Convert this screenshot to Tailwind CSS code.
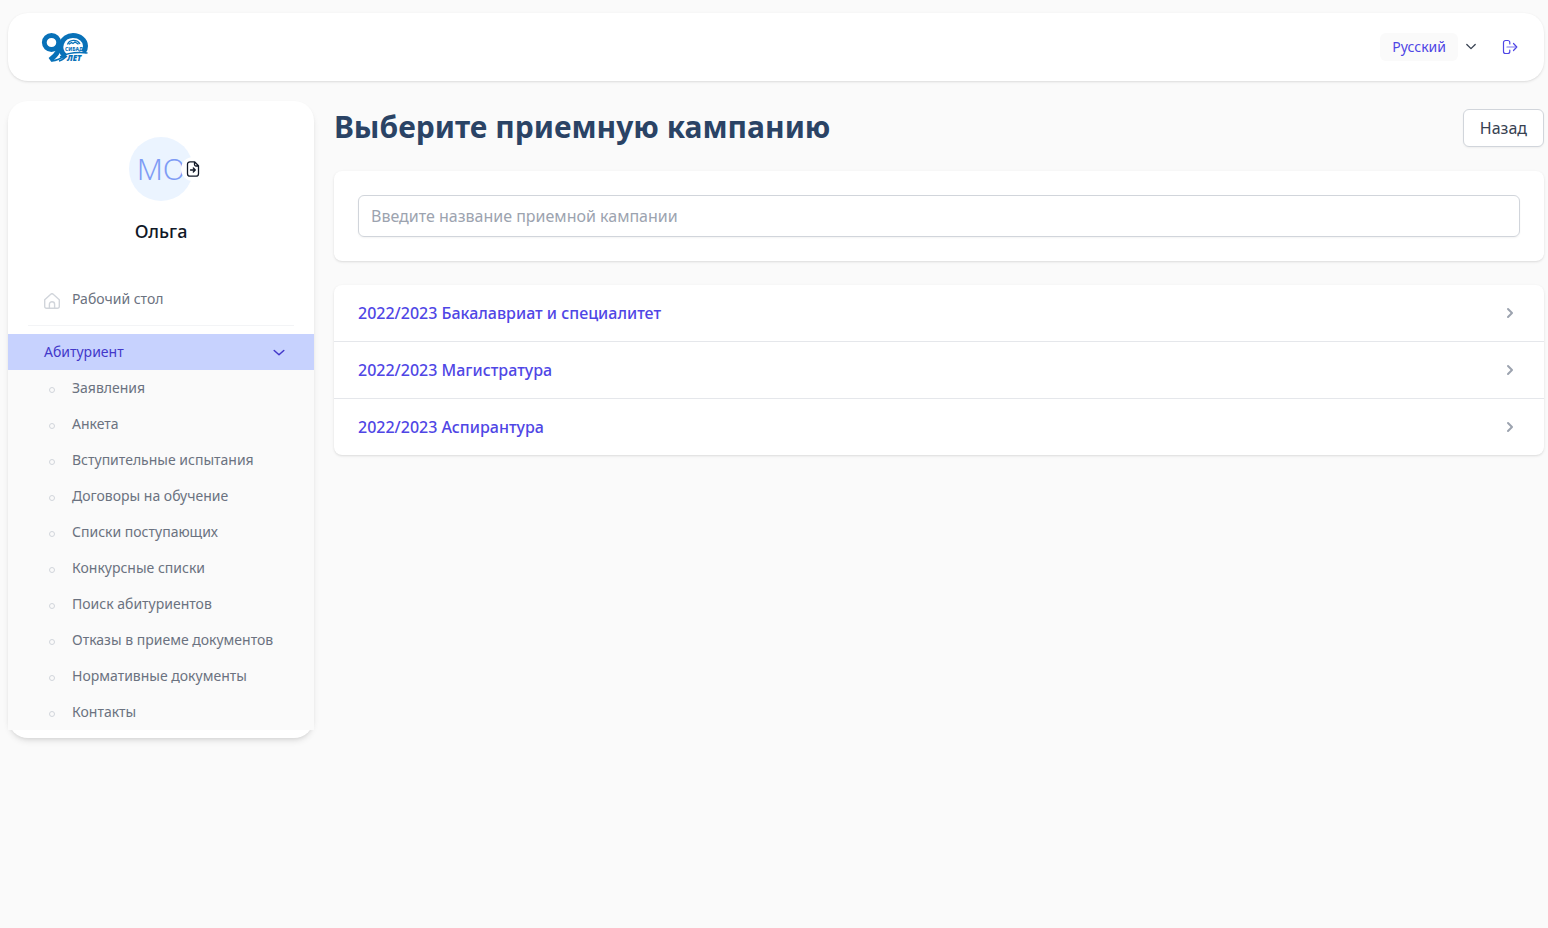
<!DOCTYPE html>
<html lang="ru">
<head>
<meta charset="utf-8">
<meta name="viewport" content="width=device-width, initial-scale=1">
<title>Выберите приемную кампанию</title>
<script src="https://cdn.jsdelivr.net/npm/@tailwindcss/browser@4"></script>
</head>
<body class="min-h-screen bg-[#fafafa] pt-[13px] pr-1 pb-4 pl-2 font-['Noto_Sans',sans-serif] text-[#111827]">
<header class="flex h-[68px] items-center justify-between rounded-[20px] bg-white pr-[26px] pl-[34px] shadow-sm">
  <a href="#" aria-label="90 лет СИБАДИ">
    <svg class="h-[30px] w-[47px] overflow-visible" viewBox="0 0 47 30" fill="none">
      <ellipse cx="9.500" cy="10.500" rx="7.200" ry="7" stroke="#0871b8" stroke-width="4.800"/>
      <path d="M17 10c1.500 7-2 13-9 18" stroke="#0871b8" stroke-width="4.800"/>
      <path d="M23 23.500c-4-3-5-7.500-3.500-12C21 7 25.500 3.600 31 3.600c7 0 12.500 4.500 12.500 10.400 0 2.500-.8 4.500-2 6" stroke="#0871b8" stroke-width="5"/>
      <path d="M25.500 12.500c1.500-5 9.500-6 12.500-.5M27 12.300l2.500-1.800 1.500 1 2-1.500 3.500 2.200" stroke="#0871b8" stroke-width="1.300"/>
      <path d="M18 25c8-4.500 18-5 27.500-4" stroke="#0871b8" stroke-width="1.500"/>
      <path d="M10 29c6-.5 9-2.500 14-6M17 29c3-.5 5-2.500 8-5" stroke="#0871b8" stroke-width="1.600"/>
      <text x="23" y="18.500" font-size="5" font-weight="800" fill="#0871b8">СИБАДИ</text>
      <text x="25" y="29" font-size="8" font-weight="900" font-style="italic" fill="#0871b8">ЛЕТ</text>
    </svg>
  </a>
  <div class="flex items-center">
    <button class="flex items-center text-sm text-[#4f46e5]"><span class="rounded-md bg-[#fafafa] px-3 py-1">Русский</span>
      <svg class="ml-[7px] h-3 w-3 text-[#374151]" viewBox="0 0 12 12" fill="none" stroke="currentColor" stroke-width="1.300" stroke-linecap="round" stroke-linejoin="round"><path d="M1.800 3.500 6 7.600l4.200-4.100"/></svg>
    </button>
    <button class="ml-[25px]" aria-label="Выйти">
      <svg class="h-4 w-4 text-[#4f46e5]" viewBox="0 0 16 16" fill="none" stroke="currentColor" stroke-width="1.200" stroke-linecap="round" stroke-linejoin="round"><path d="M7.800 5V3.500a2 2 0 0 0-2-2H3.500a2 2 0 0 0-2 2v9a2 2 0 0 0 2 2h2.300a2 2 0 0 0 2-2V11M11.500 4.500 14.800 8l-3.300 3.500"/><path d="M5 8h9" opacity=".75"/></svg>
    </button>
  </div>
</header>
<div class="mt-5 flex items-start gap-5">
  <aside class="w-[306px] shrink-0 rounded-[20px] bg-white pt-9 pb-2 shadow-md">
    <div class="flex flex-col items-center">
      <div class="relative flex h-16 w-16 items-center justify-center rounded-full bg-[#ebf4ff] text-3xl font-light text-[#7f9cf5]">МО
        <a href="#" aria-label="Открыть профиль" class="absolute top-5 -right-3 flex h-6 w-6 items-center justify-center rounded-full bg-white text-[#111827]">
          <svg class="h-4 w-4" viewBox="0 0 16 16" fill="none" stroke="currentColor" stroke-width="1.300" stroke-linecap="round" stroke-linejoin="round"><path d="M9.500.800H5a2.500 2.500 0 0 0-2.500 2.500v9.400A2.500 2.500 0 0 0 5 15.200h6a2.500 2.500 0 0 0 2.500-2.500V4.800zM9.500 1v2.500a1.500 1.500 0 0 0 1.500 1.500h2.300M5.500 9h4.800M8.300 7l2 2-2 2"/></svg>
        </a>
      </div>
      <p class="mt-4 text-lg leading-7 font-medium">Ольга</p>
    </div>
    <nav class="mt-9 text-sm text-[#6b7280]">
      <a href="#" class="mx-5 flex h-[45px] items-start border-b border-[#f3f4f6] px-4 pt-2">
        <svg class="mt-1 h-4 w-4 text-[#d1d5db]" viewBox="0 0 16 16" fill="none" stroke="currentColor" stroke-width="1.400" stroke-linejoin="round"><path d="M.700 6.800 6.800 1.200a1.800 1.800 0 0 1 2.400 0l6.100 5.600v6.700a1.800 1.800 0 0 1-1.800 1.800h-11a1.800 1.800 0 0 1-1.800-1.800zM5.400 15.300v-4a2.600 2.600 0 0 1 5.200 0v4"/></svg>
        <span class="ml-3">Рабочий стол</span>
      </a>
      <button class="mt-2 flex h-9 w-full items-center justify-between bg-[#c7d2fe] pr-7 pl-9 text-[#4338ca]" aria-expanded="true">Абитуриент
        <svg class="h-[14px] w-[14px]" viewBox="0 0 14 14" fill="none" stroke="currentColor" stroke-width="1.500" stroke-linecap="round" stroke-linejoin="round"><path d="M2.200 5.500 7 9.800 11.800 5.500"/></svg>
      </button>
      <ul class="bg-[#fafafa]">
        <li><a href="#" class="flex h-9 items-center pl-[41px]"><span class="mt-[3px] mr-[17px] h-[6px] w-[6px] rounded-full border border-[#d1d5db]"></span>Заявления</a></li>
        <li><a href="#" class="flex h-9 items-center pl-[41px]"><span class="mt-[3px] mr-[17px] h-[6px] w-[6px] rounded-full border border-[#d1d5db]"></span>Анкета</a></li>
        <li><a href="#" class="flex h-9 items-center pl-[41px]"><span class="mt-[3px] mr-[17px] h-[6px] w-[6px] rounded-full border border-[#d1d5db]"></span>Вступительные испытания</a></li>
        <li><a href="#" class="flex h-9 items-center pl-[41px]"><span class="mt-[3px] mr-[17px] h-[6px] w-[6px] rounded-full border border-[#d1d5db]"></span>Договоры на обучение</a></li>
        <li><a href="#" class="flex h-9 items-center pl-[41px]"><span class="mt-[3px] mr-[17px] h-[6px] w-[6px] rounded-full border border-[#d1d5db]"></span>Списки поступающих</a></li>
        <li><a href="#" class="flex h-9 items-center pl-[41px]"><span class="mt-[3px] mr-[17px] h-[6px] w-[6px] rounded-full border border-[#d1d5db]"></span>Конкурсные списки</a></li>
        <li><a href="#" class="flex h-9 items-center pl-[41px]"><span class="mt-[3px] mr-[17px] h-[6px] w-[6px] rounded-full border border-[#d1d5db]"></span>Поиск абитуриентов</a></li>
        <li><a href="#" class="flex h-9 items-center pl-[41px]"><span class="mt-[3px] mr-[17px] h-[6px] w-[6px] rounded-full border border-[#d1d5db]"></span>Отказы в приеме документов</a></li>
        <li><a href="#" class="flex h-9 items-center pl-[41px]"><span class="mt-[3px] mr-[17px] h-[6px] w-[6px] rounded-full border border-[#d1d5db]"></span>Нормативные документы</a></li>
        <li><a href="#" class="flex h-9 items-center pl-[41px]"><span class="mt-[3px] mr-[17px] h-[6px] w-[6px] rounded-full border border-[#d1d5db]"></span>Контакты</a></li>
      </ul>
    </nav>
  </aside>
  <main class="min-w-0 flex-1 pt-2">
    <div class="flex items-start justify-between">
      <h1 class="text-3xl font-bold text-[#2a4365]">Выберите приемную кампанию</h1>
      <button class="h-[38px] rounded-md border border-[#d1d5db] bg-white px-4 text-base text-[#374151] shadow-xs">Назад</button>
    </div>
    <div class="mt-6 rounded-lg bg-white p-6 shadow-sm">
      <input type="text" aria-label="Название приемной кампании" placeholder="Введите название приемной кампании" class="block h-[42px] w-full rounded-md border border-[#d1d5db] px-3 text-base shadow-xs placeholder:text-[#9ca3af]">
    </div>
    <ul class="mt-6 divide-y divide-gray-200 rounded-lg bg-white font-medium text-[#4f46e5] shadow-sm">
      <li><a href="#" class="flex h-14 items-center justify-between px-6">2022/2023 Бакалавриат и специалитет
        <svg class="h-5 w-5 text-[#9ca3af]" viewBox="0 0 20 20" fill="currentColor"><path fill-rule="evenodd" d="M7.293 14.707a1 1 0 0 1 0-1.414L10.586 10 7.293 6.707a1 1 0 0 1 1.414-1.414l4 4a1 1 0 0 1 0 1.414l-4 4a1 1 0 0 1-1.414 0z"/></svg></a></li>
      <li><a href="#" class="flex h-14 items-center justify-between px-6">2022/2023 Магистратура
        <svg class="h-5 w-5 text-[#9ca3af]" viewBox="0 0 20 20" fill="currentColor"><path fill-rule="evenodd" d="M7.293 14.707a1 1 0 0 1 0-1.414L10.586 10 7.293 6.707a1 1 0 0 1 1.414-1.414l4 4a1 1 0 0 1 0 1.414l-4 4a1 1 0 0 1-1.414 0z"/></svg></a></li>
      <li><a href="#" class="flex h-14 items-center justify-between px-6">2022/2023 Аспирантура
        <svg class="h-5 w-5 text-[#9ca3af]" viewBox="0 0 20 20" fill="currentColor"><path fill-rule="evenodd" d="M7.293 14.707a1 1 0 0 1 0-1.414L10.586 10 7.293 6.707a1 1 0 0 1 1.414-1.414l4 4a1 1 0 0 1 0 1.414l-4 4a1 1 0 0 1-1.414 0z"/></svg></a></li>
    </ul>
  </main>
</div>
</body>
</html>
